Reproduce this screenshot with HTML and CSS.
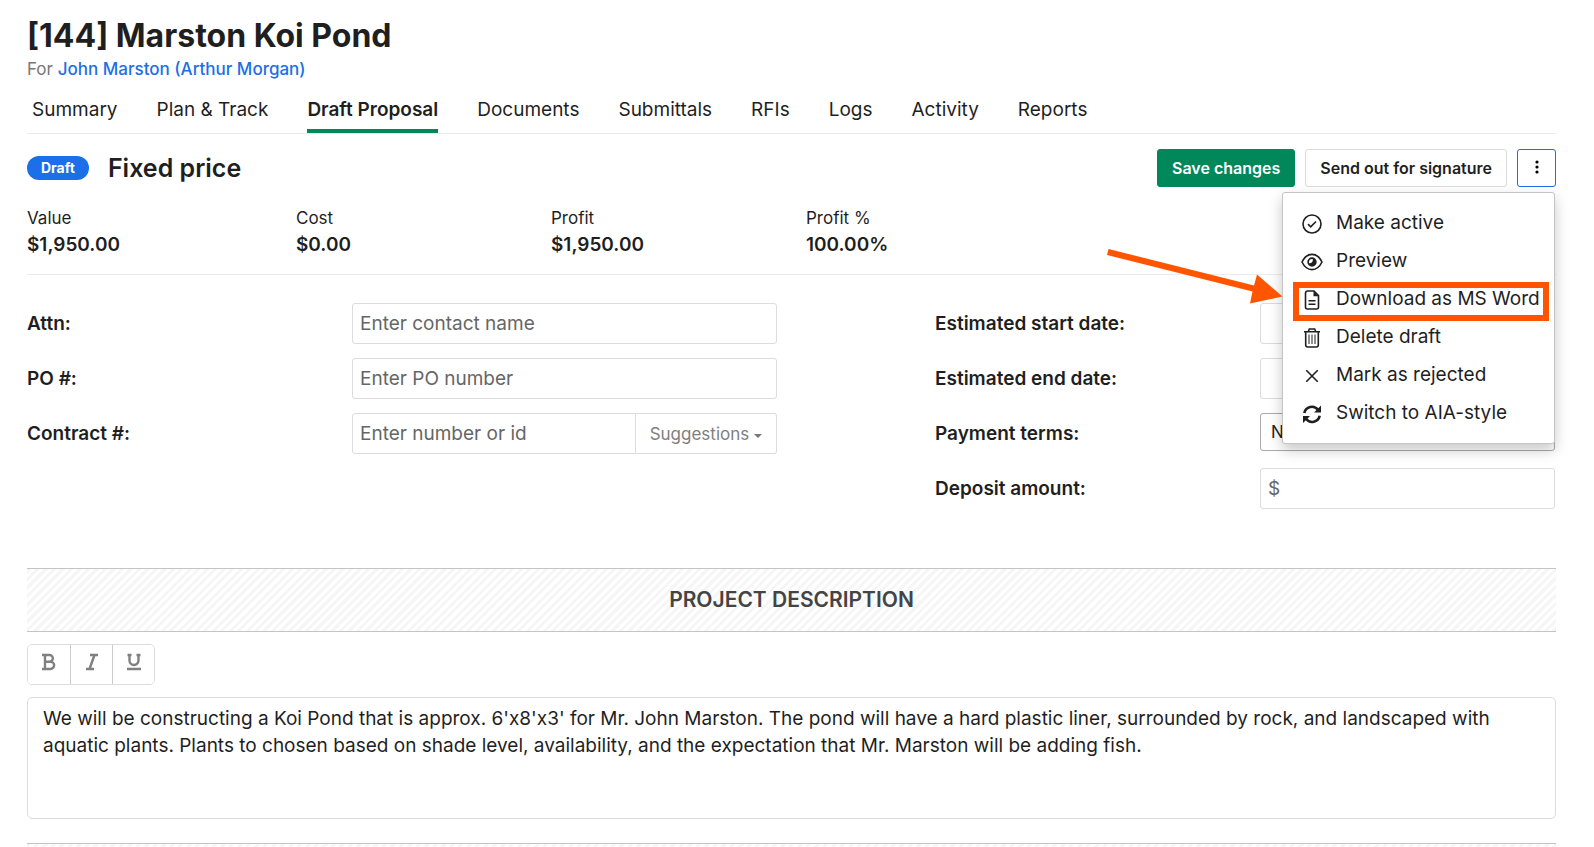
FILE: index.html
```html
<!DOCTYPE html>
<html lang="en">
<head>
    <meta charset="UTF-8">
    <meta name="viewport" content="width=device-width, initial-scale=1">
    <title>[144] Marston Koi Pond</title>
    <link rel="stylesheet" href="styles.css">
</head>
<body>
    <header>
        <h1>[144] Marston Koi Pond</h1>
        <p class="client">For <a href="#">John Marston (Arthur Morgan)</a></p>
        <nav class="tabs">
            <a href="#">Summary</a>
            <a href="#">Plan &amp; Track</a>
            <a href="#" class="active">Draft Proposal</a>
            <a href="#">Documents</a>
            <a href="#">Submittals</a>
            <a href="#">RFIs</a>
            <a href="#">Logs</a>
            <a href="#">Activity</a>
            <a href="#">Reports</a>
        </nav>
    </header>
    <main>
        <div class="toolbar">
            <span class="badge">Draft</span>
            <h2>Fixed price</h2>
            <div class="actions">
                <button type="button" class="btn save">Save changes</button>
                <button type="button" class="btn">Send out for signature</button>
                <div class="dropdown">
                    <button type="button" class="btn more" aria-label="More actions" aria-expanded="true">
                        <svg width="4" height="14" viewBox="0 0 4 14"><circle cx="2" cy="2" r="1.6"/><circle cx="2" cy="7" r="1.6"/><circle cx="2" cy="12" r="1.6"/></svg>
                    </button>
                    <div class="menu">
                        <button type="button">
                            <svg viewBox="0 0 22 22"><circle class="line" cx="11" cy="11" r="9"/><path class="line" d="M7 11.2l2.7 2.6L15 8.5"/></svg>
                            Make active
                        </button>
                        <button type="button">
                            <svg viewBox="0 0 22 22"><path class="line" d="M1 11C3.4 6 7 3.400 11 3.400S18.600 6 21 11C18.600 16 15 18.600 11 18.600S3.400 16 1 11z"/><path d="M11 6.300a4.700 4.700 0 1 1-4.700 4.700A4.700 4.700 0 0 1 11 6.300zM11 8a3 3 0 0 0-3 3c0 .5.1.8.3 1.200C10.500 12.300 12 10.800 11.900 8.200A3 3 0 0 0 11 8z" fill-rule="evenodd"/></svg>
                            Preview
                        </button>
                        <button type="button" class="marked">
                            <svg viewBox="0 0 22 22"><path class="line" d="M13 2H6.500A2 2 0 0 0 4.500 4v14a2 2 0 0 0 2 2h9a2 2 0 0 0 2-2V6.500z"/><path d="M12.500 2v5.200h5.200z"/><path class="line" d="M7.500 11.700h7M7.500 15.200h7"/></svg>
                            Download as MS Word
                        </button>
                        <button type="button">
                            <svg viewBox="0 0 22 22"><path class="line" d="M3 4.700h16M7.300 4.500l1-2.500h5.400l1 2.500M4.700 5v13a2 2 0 0 0 2 2h8.600a2 2 0 0 0 2-2V5"/><path class="thin" d="M8 7.500v9.500M11 7.500v9.500M14 7.500v9.500"/></svg>
                            Delete draft
                        </button>
                        <button type="button">
                            <svg viewBox="0 0 22 22"><path class="line" d="M5.300 5.300l11.400 11.400M16.700 5.300L5.300 16.700"/></svg>
                            Mark as rejected
                        </button>
                        <button type="button">
                            <svg viewBox="0 0 22 22"><path class="bold" d="M3.300 10A7.700 7.700 0 0 1 17 6.800M18.700 12.800A7.700 7.700 0 0 1 5 15.800"/><path d="M20 2.500v7h-7zM2 20v-7h7z"/></svg>
                            Switch to AIA-style
                        </button>
                    </div>
                    <svg class="arrow" width="178" height="58" viewBox="0 0 178 58"><path d="M1.500 1L147 37.500 150 26.500 175.500 48.500 143 55.500 145.500 43.500 0 7z"/></svg>
                </div>
            </div>
        </div>
        <dl class="stats">
            <div><dt>Value</dt><dd>$1,950.00</dd></div>
            <div><dt>Cost</dt><dd>$0.00</dd></div>
            <div><dt>Profit</dt><dd>$1,950.00</dd></div>
            <div><dt>Profit %</dt><dd>100.00%</dd></div>
        </dl>
        <form class="details">
            <div class="fields">
                <label for="attn">Attn:</label>
                <input id="attn" type="text" placeholder="Enter contact name">
                <label for="po">PO #:</label>
                <input id="po" type="text" placeholder="Enter PO number">
                <label for="contract">Contract #:</label>
                <div class="group">
                    <input id="contract" type="text" placeholder="Enter number or id">
                    <button type="button">Suggestions <span class="caret"></span></button>
                </div>
            </div>
            <div class="fields dates">
                <label for="start">Estimated start date:</label>
                <input id="start" type="text">
                <label for="end">Estimated end date:</label>
                <input id="end" type="text">
                <label for="terms">Payment terms:</label>
                <select id="terms"><option>Net 30</option></select>
                <label for="deposit">Deposit amount:</label>
                <input id="deposit" type="text" placeholder="$">
            </div>
        </form>
        <h3 class="section">PROJECT DESCRIPTION</h3>
        <div class="format">
            <button type="button" aria-label="Bold"><svg width="16" height="18" viewBox="0 0 16 18"><path d="M1 2h7.500a3.300 3.300 0 0 1 0 6.700H4M8.500 8.700h1a3.600 3.600 0 0 1 0 7.300H1M4 2v14"/></svg></button>
            <button type="button" aria-label="Italic"><svg width="16" height="18" viewBox="0 0 16 18"><path d="M6 2h8M2 16h8M10.500 2L5.500 16"/></svg></button>
            <button type="button" aria-label="Underline"><svg width="16" height="18" viewBox="0 0 16 18"><path d="M1.500 2h4M10.500 2h4M3.500 2v5.500a4.500 4.500 0 0 0 9 0V2M1 16h14"/></svg></button>
        </div>
        <textarea aria-label="Project description">We will be constructing a Koi Pond that is approx. 6'x8'x3' for Mr. John Marston. The pond will have a hard plastic liner, surrounded by rock, and landscaped with aquatic plants. Plants to chosen based on shade level, availability, and the expectation that Mr. Marston will be adding fish.</textarea>
        <div class="section"></div>
    </main>
</body>
</html>
```
FILE: styles.css
```css
*{
    box-sizing: border-box;
    margin: 0;
    padding: 0;
}
html,body{
    height: 100%;
}
body{
    padding: 16px 38px 0 27px;
    font-family: Inter, "Liberation Sans", sans-serif;
    font-size: 19px;
    color: #1f1f1f;
    background-color: white;
    overflow-x: hidden;
}
button,input,select,textarea{
    font: inherit;
    color: inherit;
    background-color: white;
}
h1{
    font-size: 32px;
    line-height: 40px;
    font-weight: 700;
}
.client{
    font-size: 17px;
    line-height: 26px;
    color: #777;
}
.client a{
    color: #1b6fe8;
    font-weight: 500;
    text-decoration: none;
}
.tabs{
    display: flex;
    gap: 39px;
    margin-top: 11px;
    padding-left: 5px;
    border-bottom: 1px solid #ececec;
}
.tabs a{
    height: 40px;
    line-height: 34px;
    color: inherit;
    text-decoration: none;
}
.tabs .active{
    font-weight: 600;
    border-bottom: 4px solid #00875a;
    border-radius: 3px 3px 0 0;
}
.toolbar{
    display: flex;
    align-items: center;
    margin-top: 15px;
}
.badge{
    padding: 0 14px;
    font-size: 14px;
    line-height: 24px;
    font-weight: 700;
    color: white;
    background-color: #1b6fe8;
    border-radius: 12px;
}
h2{
    margin-left: 19px;
    font-size: 25px;
    font-weight: 600;
}
.actions{
    display: flex;
    gap: 10px;
    margin-left: auto;
}
.btn{
    height: 38px;
    padding: 0 14px;
    font-size: 16px;
    font-weight: 600;
    border: 1px solid #dcdcdc;
    border-radius: 3px;
}
.save{
    color: white;
    background-color: #00875a;
    border-color: #00875a;
}
.more{
    width: 39px;
    border-color: #1b6fe8;
}
.dropdown{
    position: relative;
}
.menu{
    position: absolute;
    z-index: 1;
    top: 43px;
    right: 1px;
    width: 273px;
    padding: 10px 10px 12px;
    background-color: white;
    border: 1px solid #c4c4c4;
    border-radius: 3px;
    box-shadow: 0 6px 14px rgba(0,0,0,0.22);
}
.menu button{
    position: relative;
    display: flex;
    align-items: center;
    gap: 13px;
    width: 100%;
    height: 38px;
    padding-left: 8px;
    background: none;
    border: 0;
    white-space: nowrap;
}
.menu svg{
    flex: none;
    width: 22px;
    height: 22px;
    margin-top: 4px;
    fill: #1f1f1f;
}
.menu .line,.menu .thin,.menu .bold{
    fill: none;
    stroke: #1f1f1f;
    stroke-width: 1.6;
}
.menu .thin{
    stroke-width: 1;
}
.menu .bold{
    stroke-width: 2.6;
}
.marked::after{
    content: "";
    position: absolute;
    inset: 3px -5px -4px 0;
    border: 6px solid #ff5500;
}
.arrow{
    position: absolute;
    z-index: 1;
    top: 99px;
    right: 271px;
    fill: #ff5500;
}
.stats{
    display: grid;
    grid-template-columns: 269fr 255fr 255fr 750fr;
    padding: 18px 0 16px;
    border-bottom: 1px solid #ececec;
}
dt{
    font-size: 17px;
    line-height: 26px;
}
dd{
    line-height: 27px;
    font-weight: 600;
}
.details{
    display: grid;
    grid-template-columns: 750fr 621fr;
    gap: 158px;
    margin-top: 28px;
}
.fields{
    display: grid;
    grid-template-columns: 325fr 425fr;
    grid-auto-rows: 41px;
    row-gap: 14px;
}
.dates{
    grid-template-columns: 325fr 295fr;
    padding-right: 1px;
}
.fields label{
    font-weight: 600;
    line-height: 42px;
}
.fields input,.fields select{
    width: 100%;
    min-width: 0;
    height: 41px;
    padding: 0 7px;
    border: 1px solid #dcdcdc;
    border-radius: 3px;
}
.fields select{
    height: 38px;
    padding: 0 10px;
    font-size: 17px;
    border-color: #aaa;
    appearance: none;
}
::placeholder{
    color: #666;
    opacity: 1;
}
.group{
    display: flex;
}
.fields .group input{
    border-radius: 3px 0 0 3px;
}
.group button{
    flex: none;
    padding: 0 14px;
    font-size: 17px;
    color: #808080;
    border: 1px solid #dcdcdc;
    border-left: 0;
    border-radius: 0 3px 3px 0;
}
.caret{
    display: inline-block;
    border: 4px solid transparent;
    border-top-color: #777;
    border-bottom: 0;
    vertical-align: 2px;
}
.section{
    height: 64px;
    margin-top: 59px;
    font-size: 21px;
    line-height: 62px;
    font-weight: 600;
    text-align: center;
    color: #444;
    background: repeating-linear-gradient(-45deg, #f6f6f6 0 3px, white 3px 6px);
    border: 1px solid #c4c4c4;
    border-width: 1px 0;
}
.format{
    display: inline-flex;
    margin: 12px 0;
    border: 1px solid #dcdcdc;
    border-radius: 5px;
    overflow: hidden;
}
.format button{
    width: 42px;
    height: 39px;
    border: 0;
    border-left: 1px solid #ccc;
}
.format button:first-child{
    border-left: 0;
}
.format svg{
    fill: none;
    stroke: #808080;
    stroke-width: 2.4;
}
textarea{
    display: block;
    width: 100%;
    height: 122px;
    padding: 7px 15px;
    line-height: 27px;
    border: 1px solid #dcdcdc;
    border-radius: 5px;
    resize: none;
}
textarea + .section{
    margin-top: 24px;
}
```
